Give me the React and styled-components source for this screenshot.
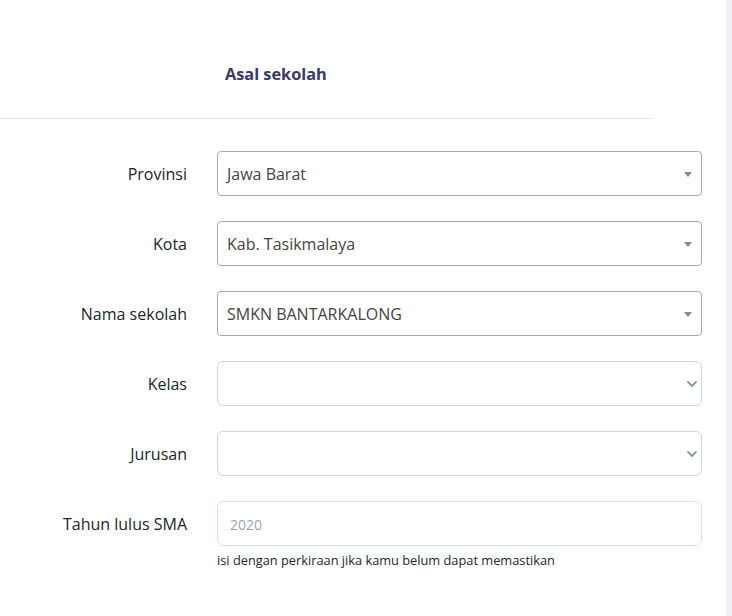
import React from "react";
import styled, { createGlobalStyle } from "styled-components";

const Global = createGlobalStyle`
  html, body { margin: 0; padding: 0; background: #fff; }
  body { font-family: "Open Sans", "Noto Sans", sans-serif; color: #212529; }
`;

const Page = styled.div`
  display: flex;
  width: 732px;
  height: 616px;
  overflow: hidden;
`;

const Main = styled.div`
  width: 726px;
  display: flex;
  flex-direction: column;
`;

const Track = styled.div`
  width: 6px;
  background: #eff0f8;
`;

const Header = styled.div`
  height: 118px;
  box-sizing: border-box;
  padding: 62px 0 0 225px;
`;

const Title = styled.h2`
  margin: 0;
  font-size: 16.3px;
  line-height: 24px;
  font-weight: 700;
  color: #3a3868;
`;

const Divider = styled.div`
  width: 653px;
  height: 1px;
  background: #e6e6e6;
`;

const Form = styled.div`
  display: flex;
  flex-direction: column;
  gap: 25px;
  padding-top: 32px;
`;

const Row = styled.div`
  display: grid;
  grid-template-columns: 187px 485px;
  column-gap: 30px;
  align-items: start;
`;

const Label = styled.label`
  box-sizing: border-box;
  height: 45px;
  padding-top: 2px;
  text-align: right;
  font-size: 16px;
  line-height: 43px;
  color: #212529;
`;

const Field = styled.div`
  display: flex;
  flex-direction: column;
`;

const Box = styled.div`
  position: relative;
  box-sizing: border-box;
  height: 45px;
  border: 1px solid ${(p) => p.$border};
  border-radius: ${(p) => p.$radius}px;
  background: #fff;
  display: flex;
  align-items: center;
  padding: 1px 30px 0 ${(p) => p.$pad}px;
  font-size: ${(p) => p.$size}px;
  color: ${(p) => p.$color};
`;

const Caret = styled.span`
  position: absolute;
  right: 9px;
  top: 50%;
  margin-top: -2px;
  width: 0;
  height: 0;
  border-left: 4px solid transparent;
  border-right: 4px solid transparent;
  border-top: 5px solid #888;
`;

const Chevron = styled.svg`
  position: absolute;
  right: 3px;
  top: 50%;
  margin-top: -4px;
`;

const Help = styled.div`
  margin-top: 5px;
  font-size: 12.8px;
  line-height: 18px;
  color: #212529;
`;

function Select2({ value }) {
  return (
    <Box $border="#aaaaaa" $radius={4} $pad={9} $size={16} $color="#444">
      {value}
      <Caret />
    </Box>
  );
}

function NativeSelect() {
  return (
    <Box $border="#cdd4dc" $radius={6} $pad={12} $size={16} $color="#444">
      <Chevron width="12" height="8" viewBox="0 0 12 8">
        <path d="M2 2l4 4 4-4" fill="none" stroke="#8797ab" strokeWidth="1.8" strokeLinecap="round" strokeLinejoin="round" />
      </Chevron>
    </Box>
  );
}

export default function App() {
  return (
    <>
      <Global />
      <Page>
        <Main>
          <Header>
            <Title>Asal sekolah</Title>
          </Header>
          <Divider />
          <Form>
            <Row>
              <Label>Provinsi</Label>
              <Select2 value="Jawa Barat" />
            </Row>
            <Row>
              <Label>Kota</Label>
              <Select2 value="Kab. Tasikmalaya" />
            </Row>
            <Row>
              <Label>Nama sekolah</Label>
              <Select2 value="SMKN BANTARKALONG" />
            </Row>
            <Row>
              <Label>Kelas</Label>
              <NativeSelect />
            </Row>
            <Row>
              <Label>Jurusan</Label>
              <NativeSelect />
            </Row>
            <Row>
              <Label>Tahun lulus SMA</Label>
              <Field>
                <Box $border="#cfe7f1" $radius={6} $pad={12} $size={14} $color="#94a3b8">
                  2020
                </Box>
                <Help>isi dengan perkiraan jika kamu belum dapat memastikan</Help>
              </Field>
            </Row>
          </Form>
        </Main>
        <Track />
      </Page>
    </>
  );
}
